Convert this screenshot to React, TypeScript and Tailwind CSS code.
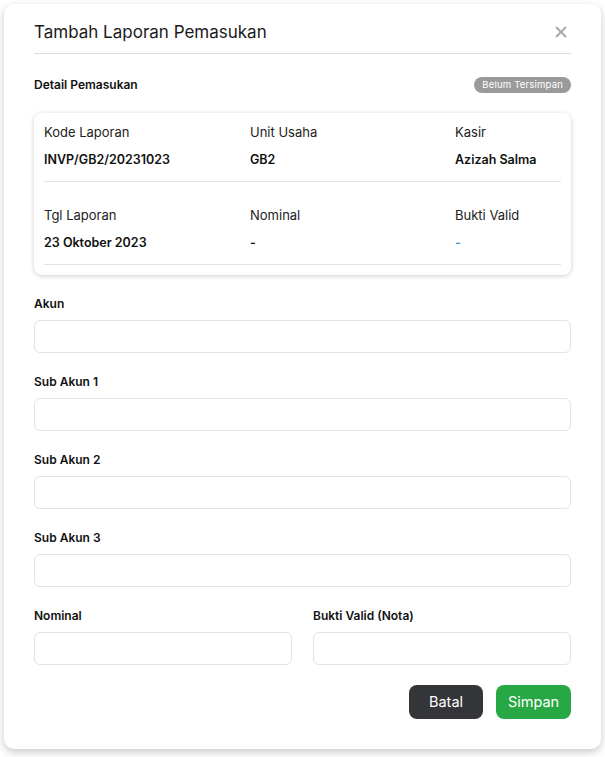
import { X } from "lucide-react";

const fields = ["Akun", "Sub Akun 1", "Sub Akun 2", "Sub Akun 3"];

const InfoRow = ({ items }: { items: { label: string; value: string; blue?: boolean }[] }) => (
  <div className="grid grid-cols-[206px_205px_1fr] border-b border-[#e3e3e3] pb-[12px]">
    {items.map((it) => (
      <div key={it.label}>
        <div className="text-[13px] leading-[18px] text-[#222]">{it.label}</div>
        <div
          className={`mt-[10px] text-[12.5px] leading-[18px] font-semibold ${
            it.blue ? "text-[#3b8fe0]" : "text-[#111]"
          }`}
        >
          {it.value}
        </div>
      </div>
    ))}
  </div>
);

const App = () => {
  return (
    <div className="min-h-screen bg-white font-['Inter',sans-serif] text-[#212529]">
      <div className="mx-[4px] mt-[4px] rounded-[10px] bg-white px-[30px] pb-[30px] pt-[16px] shadow-[0_3px_8px_rgba(0,0,0,0.22)]">
        <div className="flex items-center justify-between border-b border-[#dcdcdc] pb-[9px]">
          <h2 className="text-[17px] leading-[24px] text-[#1a1a1a]">Tambah Laporan Pemasukan</h2>
          <X size={18} strokeWidth={2.5} className="text-[#a8a8a8] mr-[1px]" />
        </div>

        <div className="mt-[22px] flex items-center justify-between">
          <span className="text-[12px] font-semibold text-[#111]">Detail Pemasukan</span>
          <span className="rounded-full bg-[#9a9a9a] px-[8px] py-[1px] text-[9.5px] leading-[14px] tracking-[0.2px] text-white">
            Belum Tersimpan
          </span>
        </div>

        <div className="mt-[19px] rounded-[8px] px-[10px] pb-[10px] shadow-[0_1px_5px_rgba(0,0,0,0.2)]">
          <div className="pt-[10px]">
            <InfoRow
              items={[
                { label: "Kode Laporan", value: "INVP/GB2/20231023" },
                { label: "Unit Usaha", value: "GB2" },
                { label: "Kasir", value: "Azizah Salma" },
              ]}
            />
          </div>
          <div className="pt-[24px]">
            <InfoRow
              items={[
                { label: "Tgl Laporan", value: "23 Oktober 2023" },
                { label: "Nominal", value: "-" },
                { label: "Bukti Valid", value: "-", blue: true },
              ]}
            />
          </div>
        </div>

        <div className="mt-[20px] flex flex-col gap-[20px]">
          {fields.map((f) => (
            <div key={f}>
              <label className="block text-[12px] leading-[18px] font-semibold text-[#111]">{f}</label>
              <input className="mt-[7px] block h-[33px] w-full rounded-[6px] border border-[#e2e1ec] px-3 text-[13px] outline-none" />
            </div>
          ))}
          <div className="grid grid-cols-2 gap-[21px]">
            {["Nominal", "Bukti Valid (Nota)"].map((f) => (
              <div key={f}>
                <label className="block text-[12px] leading-[18px] font-semibold text-[#111]">{f}</label>
                <input className="mt-[7px] block h-[33px] w-full rounded-[6px] border border-[#e2e1ec] px-3 text-[13px] outline-none" />
              </div>
            ))}
          </div>
        </div>

        <div className="mt-[20px] flex justify-end gap-[13px]">
          <button className="h-[34px] w-[74px] rounded-[8px] bg-[#343538] text-[14.5px] text-white">Batal</button>
          <button className="h-[34px] w-[75px] rounded-[8px] bg-[#28a745] text-[14.5px] text-white">Simpan</button>
        </div>
      </div>
    </div>
  );
};

export default App;
